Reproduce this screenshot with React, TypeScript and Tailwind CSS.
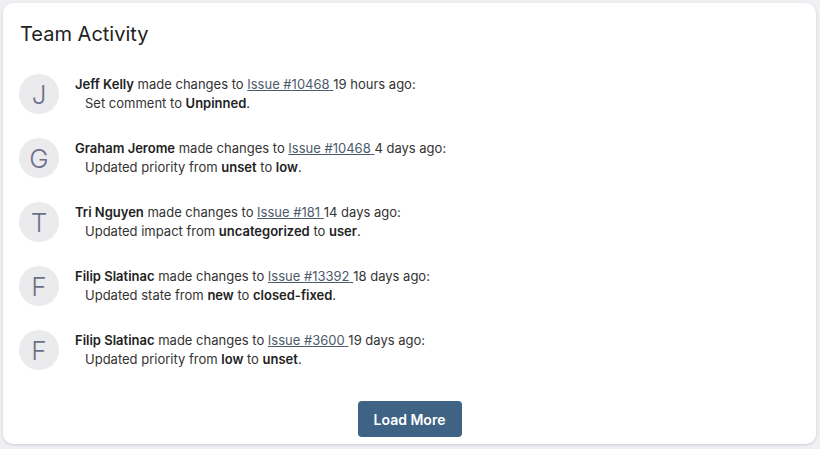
import React from 'react';

interface ActivityItem {
  name: string;
  issue: string;
  when: string;
  field: string;
  from?: string;
  to: string;
}

const items: ActivityItem[] = [
  { name: 'Jeff Kelly', issue: '10468', when: '19 hours ago:', field: 'Set comment', to: 'Unpinned' },
  { name: 'Graham Jerome', issue: '10468', when: '4 days ago:', field: 'Updated priority', from: 'unset', to: 'low' },
  { name: 'Tri Nguyen', issue: '181', when: '14 days ago:', field: 'Updated impact', from: 'uncategorized', to: 'user' },
  { name: 'Filip Slatinac', issue: '13392', when: '18 days ago:', field: 'Updated state', from: 'new', to: 'closed-fixed' },
  { name: 'Filip Slatinac', issue: '3600', when: '19 days ago:', field: 'Updated priority', from: 'low', to: 'unset' },
];

const ActivityRow: React.FC<{ item: ActivityItem }> = ({ item }) => (
  <div className="flex items-center h-[64px]">
    <div className="w-10 h-10 rounded-full bg-[#ebebee] flex items-center justify-center text-[26px] font-light text-[#6b7089] shrink-0">
      {item.name[0]}
    </div>
    <div className="ml-4 text-[13px] leading-[19px] text-[#333]">
      <div>
        <span className="font-semibold text-[#222]">{item.name}</span> made changes to{' '}
        <a href="#" className="underline text-[#4d5a6b]">Issue #{item.issue} </a>
        {item.when}
      </div>
      <div className="pl-[10px]">
        {item.field}
        {item.from && (
          <>
            {' '}from <span className="font-semibold text-[#222]">{item.from}</span>
          </>
        )}{' '}
        to <span className="font-semibold text-[#222]">{item.to}</span>.
      </div>
    </div>
  </div>
);

export default function App() {
  return (
    <div className="w-[820px] h-[449px] bg-[#f0f0f4] p-[3px] pr-[4px] pb-[5px]" style={{ fontFamily: 'Inter, "Noto Sans", sans-serif' }}>
      <div className="h-full bg-white rounded-[10px] shadow-[0_1px_3px_rgba(0,0,0,0.15)] px-[16px] pt-[19px] flex flex-col">
        <h2 className="text-[20px] leading-[24px] text-[#222] ml-[1px]">Team Activity</h2>
        <div className="mt-[16px] flex flex-col">
          {items.map((item, i) => (
            <ActivityRow key={i} item={item} />
          ))}
        </div>
        <div className="flex justify-center mt-[19px]">
          <button className="w-[104px] h-[36px] bg-[#3e6385] rounded-[4px] text-white text-[14px] font-semibold">
            Load More
          </button>
        </div>
      </div>
    </div>
  );
}
